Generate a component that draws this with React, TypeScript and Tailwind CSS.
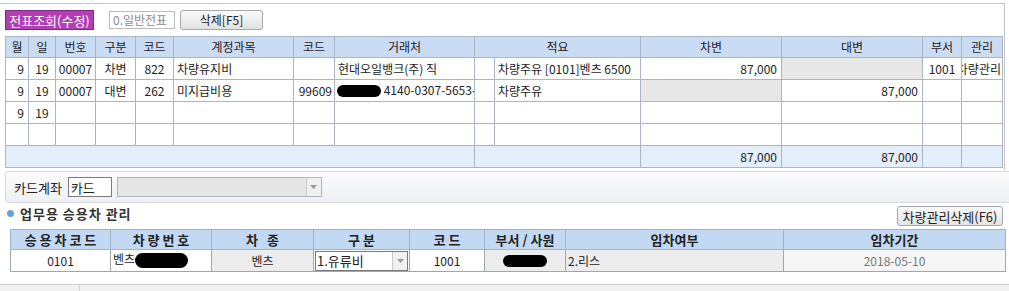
import React from "react";

const th = "border border-[#a9b6c8] bg-[#cadcf3] font-normal text-center p-0 h-[21px]";
const td = "border border-[#a9b6c8] p-0 h-[22px] whitespace-nowrap overflow-hidden";

function Blob({ w, h = 13 }: { w: number; h?: number }) {
  return <span className="inline-block bg-black rounded-full align-middle" style={{ width: w, height: h }} />;
}

function Arrow() {
  return (
    <span className="flex items-center justify-center w-[15px] h-full border-l border-[#c8c8c8] bg-[#f0f0f0]">
      <svg width="7" height="4" viewBox="0 0 7 4">
        <path d="M0 0h7L3.5 4z" fill="#9a9a9a" />
      </svg>
    </span>
  );
}

export default function App() {
  const widths = [23, 27, 40, 40, 38, 120, 41, 140, 20, 146, 141, 141, 39, 41];
  const lower = [100, 101, 102, 96, 75, 81, 218, 222];

  return (
    <div className="w-[1009px] h-[291px] bg-white overflow-hidden text-[12px] leading-none text-[#222] font-['Noto_Sans_CJK_KR','Noto_Sans',sans-serif]">
      {/* upper frame */}
      <div className="mt-[3px] h-[167px] w-[1005px] border-t border-r border-[#c4c4c4] pl-[5px] pt-[6px]">
        <div className="flex items-center h-[20px]">
          <div className="h-[20px] w-[89px] bg-[#b23db4] border border-[#7e2a80] text-white text-[13px] flex items-center justify-center">
            전표조회(수정)
          </div>
          <div className="ml-[15px] h-[18px] w-[66px] border border-[#bdbdbd] bg-white text-[#8a8a8a] flex items-center px-[3px]">
            0.일반전표
          </div>
          <div className="ml-[5px] h-[20px] w-[83px] rounded-[3px] border border-[#a8a8a8] bg-gradient-to-b from-[#fafafa] to-[#e2e2e2] flex items-center justify-center">
            삭제[F5]
          </div>
        </div>

        <table className="mt-[6px] table-fixed border-collapse w-[997px]">
          <colgroup>
            {widths.map((w, i) => (
              <col key={i} style={{ width: w }} />
            ))}
          </colgroup>
          <thead>
            <tr>
              <th className={th}>월</th>
              <th className={th}>일</th>
              <th className={th}>번호</th>
              <th className={th}>구분</th>
              <th className={th}>코드</th>
              <th className={th}>계정과목</th>
              <th className={th}>코드</th>
              <th className={th}>거래처</th>
              <th className={th} colSpan={2}>적요</th>
              <th className={th}>차변</th>
              <th className={th}>대변</th>
              <th className={th}>부서</th>
              <th className={th}>관리</th>
            </tr>
          </thead>
          <tbody>
            <tr>
              <td className={`${td} text-right pr-[4px]`}>9</td>
              <td className={`${td} text-center`}>19</td>
              <td className={`${td} text-center`}>00007</td>
              <td className={`${td} text-center`}>차변</td>
              <td className={`${td} text-center`}>822</td>
              <td className={`${td} pl-[3px]`}>차량유지비</td>
              <td className={td}></td>
              <td className={`${td} pl-[3px]`}>현대오일뱅크(주) 직</td>
              <td className={td}></td>
              <td className={`${td} pl-[3px]`}>차량주유 [0101]벤츠 6500</td>
              <td className={`${td} text-right pr-[4px]`}>87,000</td>
              <td className={`${td} bg-[#e7e7e7]`}></td>
              <td className={`${td} text-center`}>1001</td>
              <td className={td}>
                <div className="flex justify-end overflow-hidden pr-[1px]">
                  <span className="shrink-0">차량관리</span>
                </div>
              </td>
            </tr>
            <tr>
              <td className={`${td} text-right pr-[4px]`}>9</td>
              <td className={`${td} text-center`}>19</td>
              <td className={`${td} text-center`}>00007</td>
              <td className={`${td} text-center`}>대변</td>
              <td className={`${td} text-center`}>262</td>
              <td className={`${td} pl-[3px]`}>미지급비용</td>
              <td className={`${td} text-right pr-[2px]`}>99609</td>
              <td className={`${td} pl-[2px]`}>
                <Blob w={44} h={12} /> 4140-0307-5653-3
              </td>
              <td className={td}></td>
              <td className={`${td} pl-[3px]`}>차량주유</td>
              <td className={`${td} bg-[#e7e7e7]`}></td>
              <td className={`${td} text-right pr-[4px]`}>87,000</td>
              <td className={td}></td>
              <td className={td}></td>
            </tr>
            <tr>
              <td className={`${td} text-right pr-[4px]`}>9</td>
              <td className={`${td} text-center`}>19</td>
              {widths.slice(2).map((_, i) => (
                <td key={i} className={td}></td>
              ))}
            </tr>
            <tr>
              {widths.map((_, i) => (
                <td key={i} className={td}></td>
              ))}
            </tr>
            <tr className="bg-[#e4eefb]">
              <td className={`${td} h-[21px]`} colSpan={8}></td>
              <td className={td} colSpan={2}></td>
              <td className={`${td} text-right pr-[4px]`}>87,000</td>
              <td className={`${td} text-right pr-[4px]`}>87,000</td>
              <td className={td}></td>
              <td className={td}></td>
            </tr>
          </tbody>
        </table>
      </div>

      {/* card account panel */}
      <div className="mt-px ml-[5px] h-[32px] border-y border-l border-[#d6d9de] rounded-l-[4px] bg-gradient-to-b from-[#fbfbfc] to-[#eef0f3] flex items-center pl-[8px]">
        <span className="text-[13px]">카드계좌</span>
        <div className="ml-[6px] h-[20px] w-[44px] border border-[#7b7b7b] bg-white flex items-center pl-[2px] text-[13px]">
          카드
        </div>
        <div className="ml-[5px] h-[20px] w-[205px] border border-[#b5b5b5] bg-[#e6e6e6] flex justify-end">
          <Arrow />
        </div>
      </div>

      {/* section title */}
      <div className="flex items-start h-[23px] pr-[6px] mt-[3px]">
        <span className="ml-[7px] mt-[4px] w-[7px] h-[7px] rounded-full bg-[#6f9fd8]" />
        <span className="ml-[6px] mt-[1px] font-bold text-[13px] text-[#333] tracking-[1px]">업무용 승용차 관리</span>
        <div className="ml-auto h-[20px] w-[106px] rounded-[3px] border border-[#a8a8a8] bg-gradient-to-b from-[#fafafa] to-[#e4e4e4] flex items-center justify-center text-[13px]">
          차량관리삭제(F6)
        </div>
      </div>

      {/* vehicle table */}
      <table className="ml-[10px] table-fixed border-collapse w-[995px]">
        <colgroup>
          {lower.map((w, i) => (
            <col key={i} style={{ width: w }} />
          ))}
        </colgroup>
        <thead>
          <tr className="bg-[#c3d9f3]">
            {["승 용 차 코 드", "차 량 번 호", "차   종", "구 분", "코 드", "부서 / 사원", "임차여부", "임차기간"].map((h, i) => (
              <th key={i} className="border border-[#a3b3c8] h-[20px] p-0 font-bold text-[13px] text-[#222] whitespace-pre">
                {h}
              </th>
            ))}
          </tr>
        </thead>
        <tbody>
          <tr>
            <td className="border border-[#9fa6b0] h-[22px] p-0 text-center bg-white">0101</td>
            <td className="border border-[#9fa6b0] h-[22px] p-0 pl-[2px] bg-white whitespace-nowrap overflow-hidden">
              벤츠<Blob w={53} h={15} />
            </td>
            <td className="border border-[#9fa6b0] h-[22px] p-0 text-center bg-[#ececec]">벤츠</td>
            <td className="border border-[#9fa6b0] h-[22px] p-0 bg-white">
              <div className="flex h-[20px] mx-px border border-[#7b7b7b] items-stretch">
                <span className="flex-1 flex items-center pl-[1px] text-[13px]">1.유류비</span>
                <Arrow />
              </div>
            </td>
            <td className="border border-[#9fa6b0] h-[22px] p-0 text-center bg-white">1001</td>
            <td className="border border-[#9fa6b0] h-[22px] p-0 text-center bg-[#ececec]">
              <Blob w={44} h={12} />
            </td>
            <td className="border border-[#9fa6b0] h-[22px] p-0 pl-[2px] bg-[#ececec]">2.리스</td>
            <td className="border border-[#9fa6b0] h-[22px] p-0 text-center bg-[#f6f6f6] text-[#777]">2018-05-10</td>
          </tr>
        </tbody>
      </table>

      {/* bottom strip */}
      <div className="mt-[12px] border-t border-[#cfcfcf] h-[10px] bg-[#f1f1f1] flex">
        <div className="w-[80px] border-r border-[#d4d4d4]" />
      </div>
    </div>
  );
}
